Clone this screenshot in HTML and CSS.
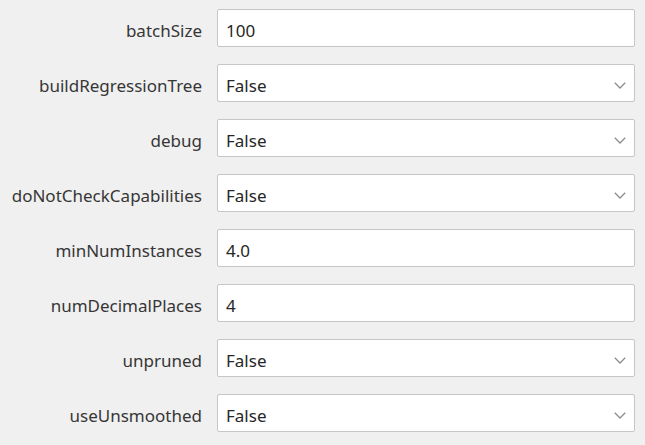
FILE: index.html
```html
<!DOCTYPE html>
<html>
<head>
<meta charset="utf-8">
<link rel="stylesheet" href="styles.css">
</head>
<body>
<div class="form">
  <label class="lbl">batchSize</label>
  <div class="field"><span class="val">100</span></div>

  <label class="lbl">buildRegressionTree</label>
  <div class="field select"><span class="val">False</span><svg class="chev" viewBox="0 0 12 7" width="12" height="7"><path d="M0.8 0.8 L6 6 L11.2 0.8" fill="none" stroke="#8c8c8c" stroke-width="1.3"/></svg></div>

  <label class="lbl">debug</label>
  <div class="field select"><span class="val">False</span><svg class="chev" viewBox="0 0 12 7" width="12" height="7"><path d="M0.8 0.8 L6 6 L11.2 0.8" fill="none" stroke="#8c8c8c" stroke-width="1.3"/></svg></div>

  <label class="lbl">doNotCheckCapabilities</label>
  <div class="field select"><span class="val">False</span><svg class="chev" viewBox="0 0 12 7" width="12" height="7"><path d="M0.8 0.8 L6 6 L11.2 0.8" fill="none" stroke="#8c8c8c" stroke-width="1.3"/></svg></div>

  <label class="lbl">minNumInstances</label>
  <div class="field"><span class="val">4.0</span></div>

  <label class="lbl">numDecimalPlaces</label>
  <div class="field"><span class="val">4</span></div>

  <label class="lbl">unpruned</label>
  <div class="field select"><span class="val">False</span><svg class="chev" viewBox="0 0 12 7" width="12" height="7"><path d="M0.8 0.8 L6 6 L11.2 0.8" fill="none" stroke="#8c8c8c" stroke-width="1.3"/></svg></div>

  <label class="lbl">useUnsmoothed</label>
  <div class="field select"><span class="val">False</span><svg class="chev" viewBox="0 0 12 7" width="12" height="7"><path d="M0.8 0.8 L6 6 L11.2 0.8" fill="none" stroke="#8c8c8c" stroke-width="1.3"/></svg></div>
</div>
</body>
</html>
```
FILE: styles.css
```css
html, body {
  margin: 0;
  padding: 0;
  background: #f0f0f0;
}
body {
  font-family: "Noto Sans", "Open Sans", sans-serif;
  font-size: 17px;
  color: #2e2e2e;
}
.form {
  display: grid;
  grid-template-columns: 202px 418px;
  column-gap: 15px;
  row-gap: 17px;
  grid-auto-rows: 38px;
  padding-top: 9px;
}
.lbl {
  display: flex;
  align-items: center;
  justify-content: flex-end;
  white-space: nowrap;
  color: #363636;
  padding-top: 4px;
  box-sizing: border-box;
}
.field {
  box-sizing: border-box;
  display: flex;
  align-items: center;
  justify-content: space-between;
  background: #fff;
  border: 1px solid #c6c6c6;
  border-radius: 2px;
  padding: 4px 8px 0 8px;
}
.val {
  color: #262626;
}
.chev {
  display: block;
}
```
